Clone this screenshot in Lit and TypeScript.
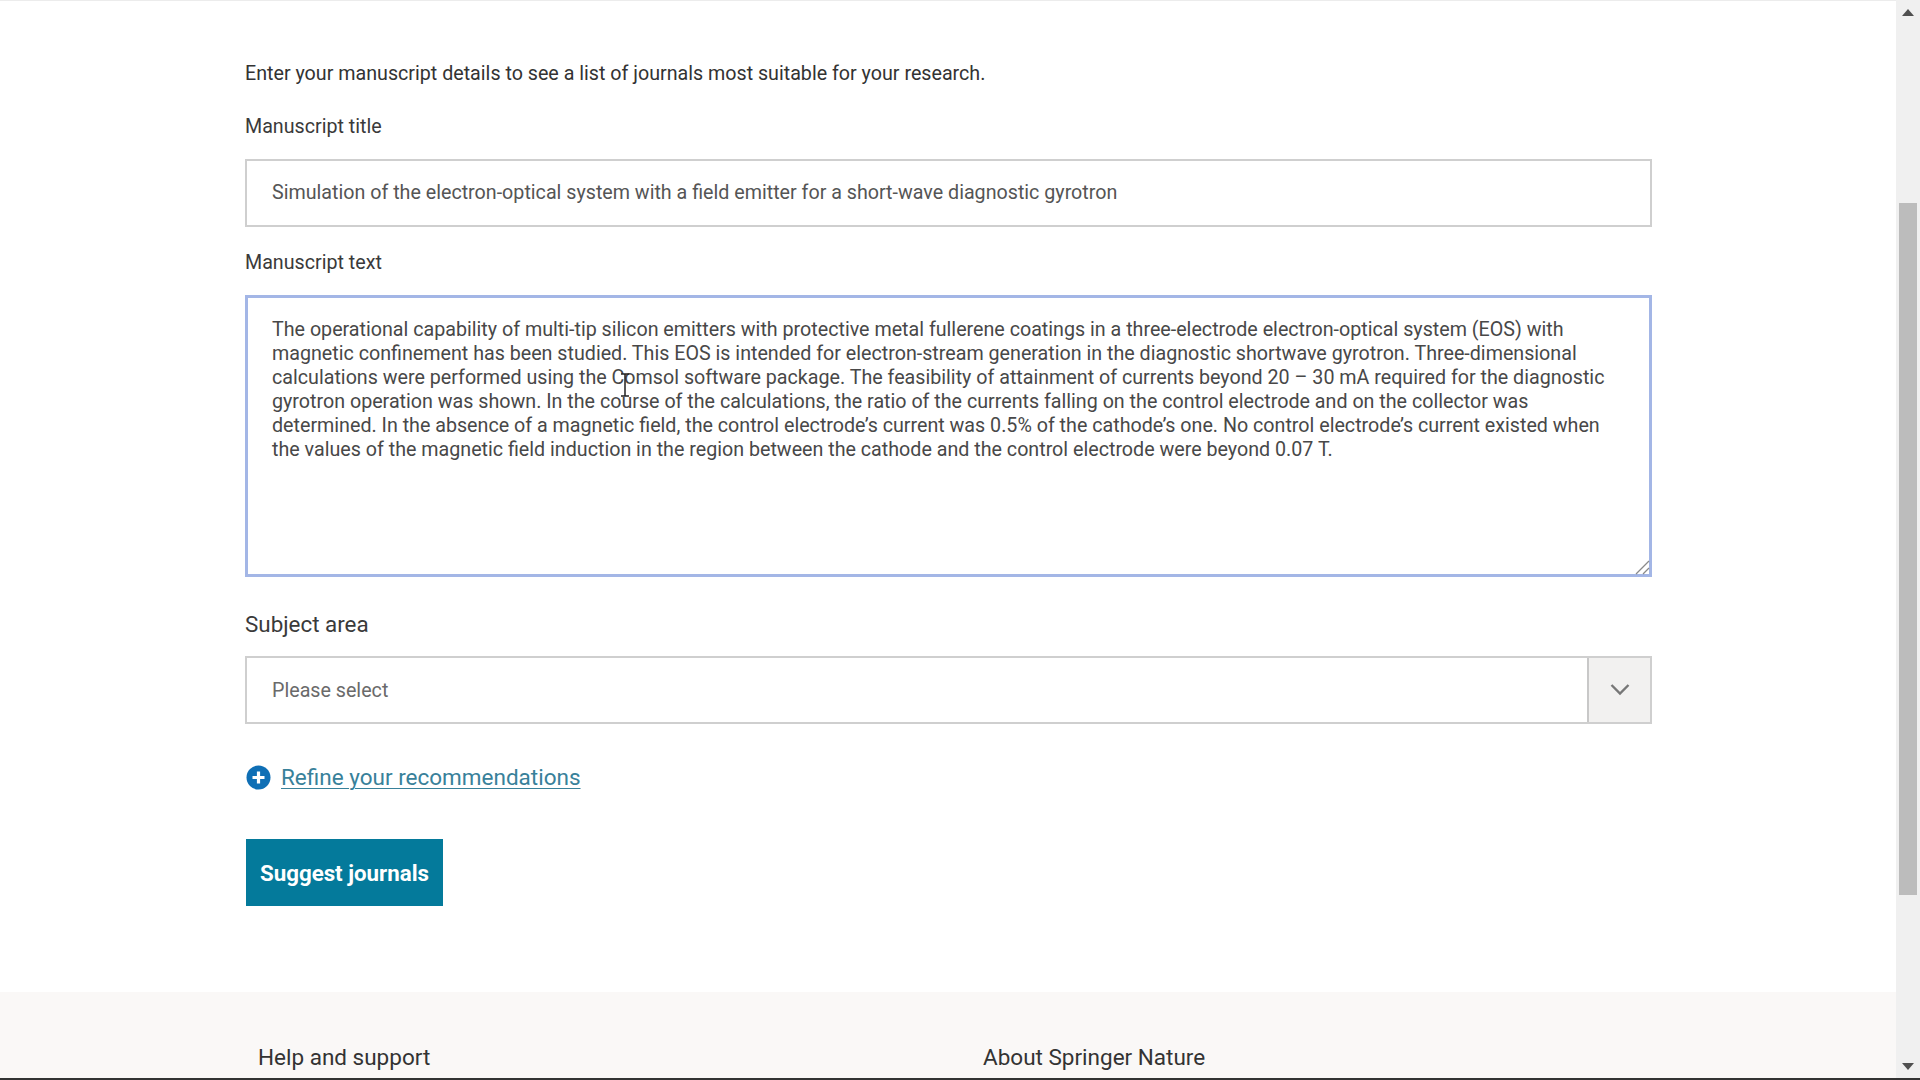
import { LitElement, html, css } from "lit";
import { customElement } from "lit/decorators.js";

const LINES = [
  "The operational capability of multi-tip silicon emitters with protective metal fullerene coatings in a three-electrode electron-optical system (EOS) with",
  "magnetic confinement has been studied. This EOS is intended for electron-stream generation in the diagnostic shortwave gyrotron. Three-dimensional",
  "calculations were performed using the Comsol software package. The feasibility of attainment of currents beyond 20 – 30 mA required for the diagnostic",
  "gyrotron operation was shown. In the course of the calculations, the ratio of the currents falling on the control electrode and on the collector was",
  "determined. In the absence of a magnetic field, the control electrode’s current was 0.5% of the cathode’s one. No control electrode’s current existed when",
  "the values of the magnetic field induction in the region between the cathode and the control electrode were beyond 0.07 T.",
];

@customElement("app-root")
export class AppRoot extends LitElement {
  static styles = css`
    :host {
      display: flex;
      height: 1080px;
      overflow: hidden;
      background: #fff;
      font-family: Roboto, "Liberation Sans", sans-serif;
      color: #333;
      position: relative;
    }
    .page { flex: 1; min-width: 0; display: flex; flex-direction: column; overflow: hidden; }
    .form { display: flex; flex-direction: column; padding: 63px 244px 0 245px; height: 992px; box-sizing: border-box; flex: none; }
    .intro { font-size: 19.68px; line-height: 22px; height: 22px; margin: 0 0 31px; color: #333; }
    .label { font-size: 19.68px; line-height: 22px; margin: 0 0 21px; color: #3a3a3a; }
    .label.second { margin-top: 25px; }
    .label.big { font-size: 22.4px; line-height: 24px; margin: 35px 0 20px; }
    .input {
      height: 68px; box-sizing: border-box; border: 2px solid #cfcfcf; background: #fff;
      display: flex; align-items: center; padding: 0 25px 2px; font-size: 19.68px; color: #555;
    }
    .area {
      position: relative; height: 282px; box-sizing: border-box; border: 3px solid #a3b6e6;
      padding: 20px 24px 18px; font-size: 19.68px; line-height: 24px; color: #484848;
    }
    .area div { white-space: nowrap; }
    .grip { position: absolute; right: -1px; bottom: -1px; width: 15px; height: 15px; }
    .cursor { position: absolute; left: 371px; top: 75px; width: 12px; height: 24px; }
    .select {
      height: 68px; box-sizing: border-box; border: 2px solid #cfcfcf; display: flex; align-items: stretch;
    }
    .select .ph { flex: 1; display: flex; align-items: center; padding-left: 25px; font-size: 19.68px; color: #6a6a6a; }
    .select .btn { width: 61px; flex: none; background: #f2f1f0; border-left: 2px solid #c8c8c8; display: flex; align-items: center; justify-content: center; padding-bottom: 1px; box-sizing: content-box; }
    .refine { display: flex; align-items: center; gap: 10px; margin: 40px 0 0 1px; height: 26px; }
    .refine a { font-size: 22.5px; color: #38819a; text-decoration: underline; text-underline-offset: 3px; text-decoration-thickness: 1px; }
    .submit {
      width: 197px; height: 67px; margin: 49px 0 0 1px; background: #047a9b; color: #fff; border: 0; padding: 0;
      font: 700 22.3px Roboto, sans-serif; display: flex; align-items: center; justify-content: center;
    }
    footer { flex: 1; background: #faf8f7; display: flex; padding: 51px 0 0 258px; font-size: 22.5px; color: #333; line-height: 28px; }
    footer .col { width: 725px; }
    .bar { width: 24px; flex: none; background: #f0f0f0; display: flex; flex-direction: column; align-items: center; }
    .arrow { height: 22px; flex: none; display: flex; align-items: center; justify-content: center; padding-top: 3px; box-sizing: border-box; }
    .arrow.down { padding: 0 0 6px; }
    .track { flex: 1; width: 100%; box-sizing: border-box; padding: 181px 3px 0; }
    .thumb { height: 692px; background: #bcbcbc; }
    .edge { position: absolute; left: 0; right: 0; bottom: 0; height: 2px; background: #333; }
    .top { position: absolute; left: 0; right: 24px; top: 0; height: 1px; background: #ececec; }
  `;

  render() {
    return html`
      <div class="top"></div>
      <div class="page">
        <div class="form">
          <p class="intro">Enter your manuscript details to see a list of journals most suitable for your research.</p>
          <div class="label">Manuscript title</div>
          <div class="input">Simulation of the electron-optical system with a field emitter for a short-wave diagnostic gyrotron</div>
          <div class="label second">Manuscript text</div>
          <div class="area">
            ${LINES.map((l) => html`<div>${l}</div>`)}
            <svg class="cursor" viewBox="0 0 12 24" fill="none" stroke="#222" stroke-width="1.5">
              <path d="M2 1h8M6 1v22M2 23h8" />
            </svg>
            <svg class="grip" viewBox="0 0 15 15" fill="none" stroke="#8a8a8a" stroke-width="1.3">
              <path d="M1 14L14 1M8 14L14 8" />
            </svg>
          </div>
          <div class="label big">Subject area</div>
          <div class="select">
            <div class="ph">Please select</div>
            <div class="btn">
              <svg width="20" height="13" viewBox="0 0 20 13" fill="none" stroke="#777" stroke-width="2.4">
                <path d="M1.5 2l8.5 8.5L18.500 2" />
              </svg>
            </div>
          </div>
          <div class="refine">
            <svg width="25" height="25" viewBox="0 0 25 25">
              <circle cx="12.5" cy="12.5" r="12" fill="#0f6fb5" />
              <path d="M12.5 6.5v12M6.5 12.5h12" stroke="#fff" stroke-width="3.2" />
            </svg>
            <a>Refine your recommendations</a>
          </div>
          <button class="submit">Suggest journals</button>
        </div>
        <footer>
          <div class="col">Help and support</div>
          <div class="col">About Springer Nature</div>
        </footer>
      </div>
      <div class="bar">
        <div class="arrow">
          <svg width="12" height="7" viewBox="0 0 12 7"><path d="M6 0l6 7H0z" fill="#505050" /></svg>
        </div>
        <div class="track"><div class="thumb"></div></div>
        <div class="arrow down">
          <svg width="12" height="7" viewBox="0 0 12 7"><path d="M0 0h12L6 7z" fill="#505050" /></svg>
        </div>
      </div>
      <div class="edge"></div>
    `;
  }
}
